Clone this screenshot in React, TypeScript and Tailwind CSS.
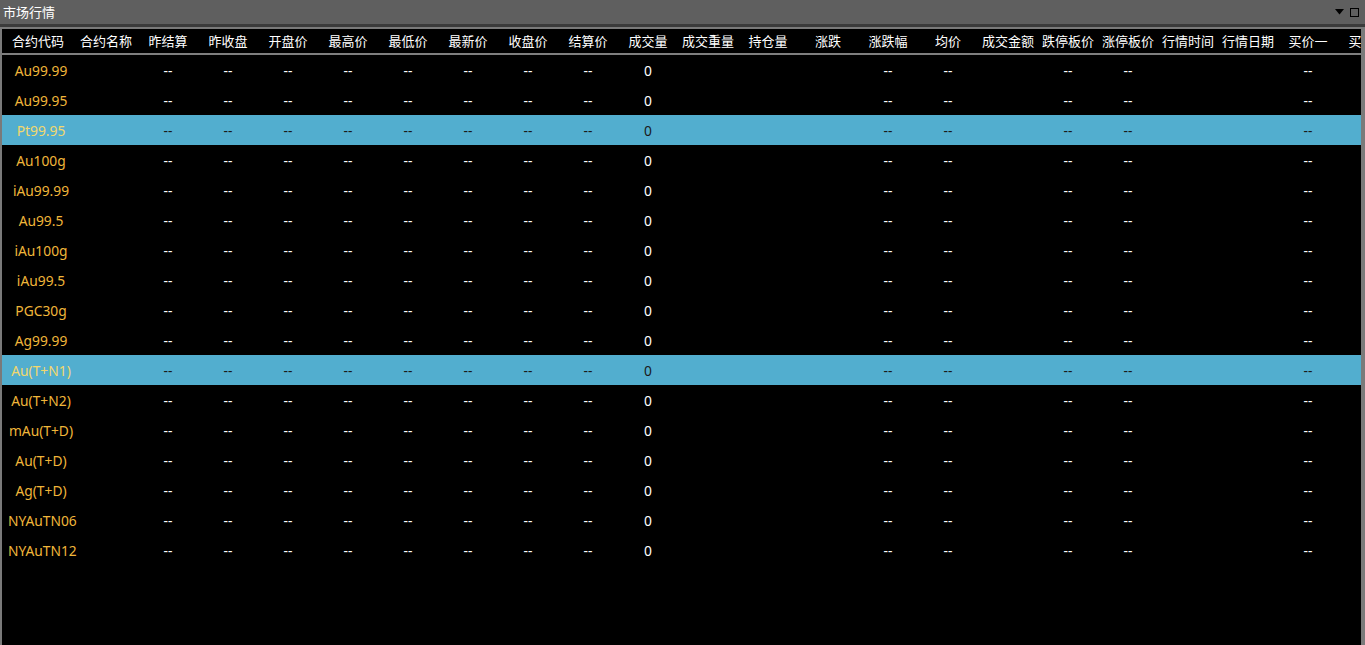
import React from "react"

const headers = [
  "合约代码", "合约名称", "昨结算", "昨收盘", "开盘价", "最高价", "最低价", "最新价",
  "收盘价", "结算价", "成交量", "成交重量", "持仓量", "涨跌", "涨跌幅", "均价",
  "成交金额", "跌停板价", "涨停板价", "行情时间", "行情日期", "买价一", "买价二",
]

const widths = [72, 64, ...Array(21).fill(60)]

const codes = [
  "Au99.99", "Au99.95", "Pt99.95", "Au100g", "iAu99.99", "Au99.5", "iAu100g", "iAu99.5",
  "PGC30g", "Ag99.99", "Au(T+N1)", "Au(T+N2)", "mAu(T+D)", "Au(T+D)", "Ag(T+D)",
  "NYAuTN06", "NYAuTN12",
]

const highlighted = ["Pt99.95", "Au(T+N1)"]

// 每行的取值, 空字符串表示空白格
const rowCells = (code: string) => [
  code, "", "--", "--", "--", "--", "--", "--", "--", "--", "0", "", "", "",
  "--", "--", "", "--", "--", "", "", "--", "",
]

const font = { fontFamily: '"Noto Sans", "Noto Sans CJK SC", sans-serif' }

export default function App() {
  return (
    <div className="flex h-[645px] w-[1365px] flex-col overflow-hidden bg-black text-[13px]" style={font}>
      {/* 标题栏 */}
      <div className="flex h-[24px] shrink-0 items-center justify-between bg-[#5f5f5f] pl-[3px] pr-[6px]">
        <span className="text-[13px] leading-none text-white">市场行情</span>
        <div className="flex items-center gap-[6px]">
          <svg width="9" height="6" viewBox="0 0 9 6">
            <path d="M0 0 H9 L4.5 5.5 Z" fill="#000" />
          </svg>
          <div className="h-[9px] w-[9px] border border-black" />
        </div>
      </div>
      <div className="h-[3px] shrink-0 bg-[#3b3b3b]" />
      <div className="flex min-h-0 flex-1 flex-col overflow-hidden border-x-2 border-t-[2px] border-[#7a7a7a] border-r-[4px]">
        {/* 表头 */}
        <div className="flex h-[26px] shrink-0 items-center border-b-2 border-[#7f7f7f] pt-[2px] text-white">
          {headers.map((h, i) => (
            <div key={i} className="shrink-0 whitespace-nowrap text-center" style={{ width: widths[i] }}>
              {h}
            </div>
          ))}
        </div>
        {codes.map((code) => {
          const hi = highlighted.includes(code)
          return (
            <div
              key={code}
              className={`flex h-[30px] shrink-0 items-center pt-[2px] text-[13.8px] ${hi ? "bg-[#52aecf]" : ""}`}
            >
              {rowCells(code).map((v, i) => (
                <div
                  key={i}
                  className={`shrink-0 whitespace-nowrap text-center ${
                    i === 0
                      ? hi
                        ? "pl-[6px] text-[#f3d86c]"
                        : "pl-[6px] text-[#f0b63a]"
                      : hi
                      ? "text-[#1a1a1a]"
                      : "text-white"
                  }`}
                  style={{ width: widths[i] }}
                >
                  {v}
                </div>
              ))}
            </div>
          )
        })}
      </div>
    </div>
  )
}
